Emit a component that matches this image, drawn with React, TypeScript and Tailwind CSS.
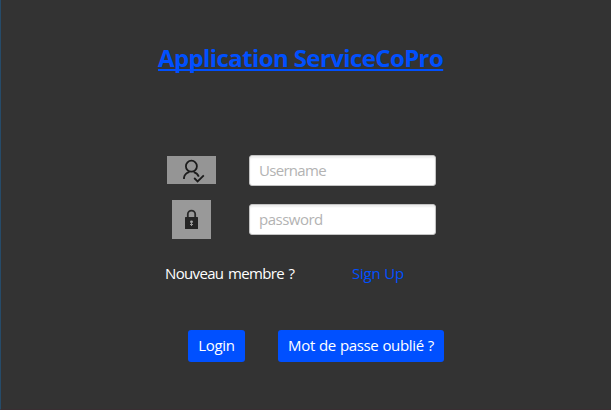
function UserCheckIcon() {
  return (
    <svg viewBox="0 0 49 28" className="block h-7 w-[49px] bg-[#959595]" fill="none" stroke="#1c1c1c" strokeWidth="1.8">
      <circle cx="24.4" cy="10.2" r="5.5" />
      <path d="M17 23V21.6C17.3 18.6 20 16.4 22.4 16.2M26.8 16.2C29 16.8 30.8 18.2 31.8 20.6" />
      <path d="M27.2 22L30.6 25.4L36.8 19.4" />
    </svg>
  );
}

function LockIcon() {
  return (
    <svg viewBox="0 0 39 39" className="block size-[39px] bg-[#999999]">
      <path d="M15.8 18V14.3A3.7 3.7 0 0 1 23.2 14.3V18" fill="none" stroke="#292929" strokeWidth="1.8" />
      <rect x="13" y="17" width="13" height="12" rx="0.5" fill="#252525" />
      <circle cx="19.5" cy="21.8" r="1.4" fill="#aaa" />
      <path d="M19.5 22V26M18 24.5H21" stroke="#999" strokeWidth="1" />
    </svg>
  );
}

const field =
  "block h-[31px] w-[187px] rounded-[3px] border border-[#c4c4c4] bg-white px-[9px] pb-px text-[15px] shadow-[inset_0_2px_2px_#eeeeee] outline-none placeholder:text-[#b3b3b3]";
const button = "flex h-8 items-center justify-center rounded-[3px] bg-[#0050ff] pb-px whitespace-nowrap text-white";

export default function App() {
  return (
    <main className="h-[410px] w-[611px] overflow-hidden border-b border-l border-b-[#392e32] border-l-[#264b69] bg-[#333333] pt-[42px] font-['Open_Sans','Noto_Sans',sans-serif] text-[15px]">
      <h1 className="ml-[157px] h-8 w-[285px] text-[24px] leading-8 font-bold tracking-[-0.61px] whitespace-nowrap text-[#0050ff] underline decoration-2 underline-offset-2 [text-decoration-skip-ink:none]">
        Application ServiceCoPro
      </h1>
      <form className="mt-[81px]">
        <div className="flex items-start pl-[166px]">
          <div className="mt-px mr-[33px]"><UserCheckIcon /></div>
          <input aria-label="Username" placeholder="Username" className={`${field} tracking-[-0.7px]`} />
        </div>
        <div className="mt-3.5 flex items-start pl-[171px]">
          <div className="mr-[38px]"><LockIcon /></div>
          <input type="text" aria-label="password" placeholder="password" className={`${field} mt-1 tracking-[-0.5px]`} />
        </div>
        <div className="mt-6 flex h-5 pl-[164px] leading-5 whitespace-nowrap">
          <span className="w-[187px] tracking-[-0.65px] text-white [word-spacing:1.3px]">Nouveau membre ?</span>
          <a className="tracking-[-0.2px] text-[#0050ff]">Sign Up</a>
        </div>
        <div className="mt-[47px] flex gap-[33px] pl-[187px]">
          <button type="button" className={`${button} w-[57px] tracking-[-0.3px]`}>Login</button>
          <button type="button" className={`${button} w-[166px] tracking-[-0.35px] [word-spacing:0.5px]`}>Mot de passe oublié ?</button>
        </div>
      </form>
    </main>
  );
}
